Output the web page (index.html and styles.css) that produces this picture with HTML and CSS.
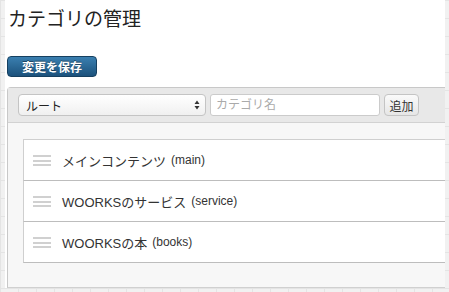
FILE: index.html
```html
<!DOCTYPE html>
<html lang="ja">
<head>
  <meta charset="UTF-8" />
  <title>カテゴリの管理</title>
  <link rel="stylesheet" href="styles.css">
</head>
<body>
<div class="page">
  <h1>カテゴリの管理</h1>

  <button class="btn-save">変更を保存</button>

  <div class="panel">
    <div class="toolbar">
      <div class="select">
        <span>ルート</span>
        <svg class="arrows" width="6" height="10" viewBox="0 0 6 10">
          <path d="M3 0.5 L5.5 4 H0.5 Z M3 9.5 L5.5 6 H0.5 Z" fill="#333"/>
        </svg>
      </div>
      <input type="text" class="input" placeholder="カテゴリ名">
      <button class="btn-add">追加</button>
    </div>

    <!-- カテゴリ一覧 -->
    <ul class="list">
      <li><span class="handle"></span>メインコンテンツ<span class="slug">(main)</span></li>
      <li><span class="handle"></span>WOORKSのサービス<span class="slug">(service)</span></li>
      <li><span class="handle"></span>WOORKSの本<span class="slug">(books)</span></li>
    </ul>
  </div>
</div>
</body>
</html>
```

FILE: styles.css
```css
body {
  margin: 0;
  height: 292px;
  overflow: hidden;
  font-family: "Liberation Sans", "Noto Sans CJK JP", sans-serif;
  background-color: #f1f1f1;
  background-image:
    linear-gradient(#e4e4e4 1px, transparent 1px),
    linear-gradient(90deg, #e4e4e4 1px, transparent 1px);
  background-size: 18px 18px;
}

.page {
  margin: 0 4px 0 5px;
  height: 288px;
  background: #fff;
  padding: 0 0 0 2px;
  display: flex;
  flex-direction: column;
  align-items: flex-start;
}

h1 {
  font-size: 19px;
  font-weight: normal;
  color: #222;
  margin: 9px 0 0 1px;
  line-height: 22px;
}

.btn-save {
  margin-top: 25px;
  width: 90px;
  height: 21px;
  border: 1px solid #164060;
  border-radius: 4px;
  background: linear-gradient(#3a7fb0, #1c527c);
  color: #fff;
  font-family: inherit;
  font-size: 12px;
  font-weight: bold;
  padding: 0;
  text-shadow: 0 -1px 0 rgba(0,0,0,0.4);
}

.panel {
  margin-top: 10px;
  align-self: stretch;
  flex: 1;
  border: 1px solid #c8c8c8;
  border-right: none;
  border-bottom: 1px solid #d0d0d0;
  border-radius: 4px 0 0 0;
  background: #f7f7f7;
}

.toolbar {
  display: flex;
  align-items: center;
  gap: 4px;
  height: 34px;
  padding: 0 0 0 10px;
  background: #e8e8e8;
  border-bottom: 1px solid #d2d2d2;
}

.select {
  box-sizing: border-box;
  width: 188px;
  height: 22px;
  border: 1px solid #c4c4c4;
  border-radius: 4px;
  background: linear-gradient(#fff, #f0f0f0);
  display: flex;
  align-items: center;
  justify-content: space-between;
  padding: 0 5px 0 7px;
  font-size: 12px;
  color: #222;
}

.input {
  box-sizing: border-box;
  width: 170px;
  height: 22px;
  border: 1px solid #cbcbcb;
  border-radius: 3px;
  padding: 0 5px;
  font-family: inherit;
  font-size: 12px;
  background: #fff;
}
.input::placeholder { color: #aaa; }

.btn-add {
  width: 35px;
  height: 22px;
  border: 1px solid #c4c4c4;
  border-radius: 4px;
  background: linear-gradient(#fafafa, #e6e6e6);
  font-family: inherit;
  font-size: 12px;
  color: #333;
  padding: 0;
}

.list {
  list-style: none;
  margin: 16px 0 0 15px;
  padding: 0;
  background: #fff;
  border-top: 1px solid #cfcfcf;
}

.list li {
  height: 40px;
  border-bottom: 1px solid #bdbdbd;
  border-left: 1px solid #cfcfcf;
  display: flex;
  align-items: center;
  font-size: 13px;
  color: #333;
}

.list .slug {
  font-size: 12px;
  margin-left: 5px;
}

.handle {
  width: 18px;
  height: 11px;
  margin: 0 11px 0 9px;
  background: repeating-linear-gradient(#d0d0d0 0 2px, transparent 2px 4.5px);
}
```
